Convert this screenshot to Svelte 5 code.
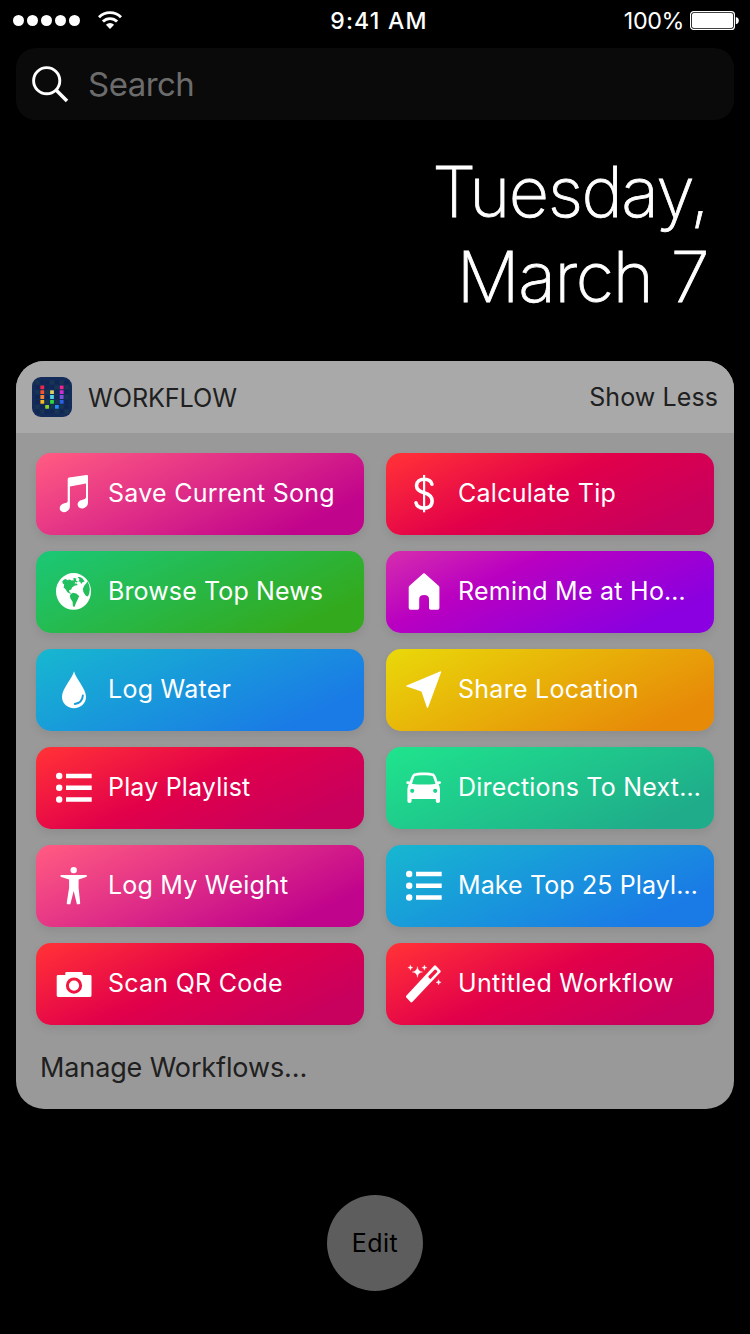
<script>
  const workflows = [
    { label: 'Save Current Song', icon: 'note', tone: 'pink', spacing: 0.26 },
    { label: 'Calculate Tip', icon: 'dollar', tone: 'red', spacing: 0.271 },
    { label: 'Browse Top News', icon: 'globe', tone: 'green', spacing: 0.12 },
    { label: 'Remind Me at Ho…', icon: 'home', tone: 'purple', spacing: 0.25 },
    { label: 'Log Water', icon: 'drop', tone: 'blue', spacing: 0.262 },
    { label: 'Share Location', icon: 'location', tone: 'yellow', spacing: 0.26 },
    { label: 'Play Playlist', icon: 'list', tone: 'red', spacing: 0.171 },
    { label: 'Directions To Next…', icon: 'car', tone: 'mint', spacing: 0.2 },
    { label: 'Log My Weight', icon: 'person', tone: 'pink', spacing: 0.218 },
    { label: 'Make Top 25 Playl…', icon: 'list', tone: 'blue', spacing: 0.11 },
    { label: 'Scan QR Code', icon: 'camera', tone: 'red', spacing: 0.254 },
    { label: 'Untitled Workflow', icon: 'wand', tone: 'red', spacing: 0.283 }
  ];

  const logoGrid = [5.4, 10.2, 15.1, 20, 24.9, 29.8, 34.6];
  const logoPixels = [
    [10.3, 10.3, '#f0244c'], [10.3, 15.2, '#f9532e'], [10.3, 20, '#fb8230'], [10.3, 24.9, '#f8b822'],
    [15.1, 29.8, '#8bd424'], [20, 15.2, '#d9cf62'], [20, 20, '#52cfe0'], [20, 24.9, '#2edb3e'],
    [24.9, 29.8, '#1f8cf8'], [29.7, 10.3, '#f0248c'], [29.7, 15.2, '#d22cd4'], [29.7, 20, '#7a52dc'], [29.7, 24.9, '#2c62e4']
  ];
</script>

<div class="screen">
  <header class="status">
    <div class="signal">
      <div class="dots"><i></i><i></i><i></i><i></i><i></i></div>
      <svg class="wifi" width="24" height="18" viewBox="0 0 24 18">
        <g fill="none" stroke="#fff" stroke-width="2.9">
          <path d="M1 6.2A15.6 15.6 0 0 1 23 6.2" />
          <path d="M4.9 10.6A10 10 0 0 1 19.1 10.6" />
        </g>
        <path fill="#fff" d="M12 18 7.9 13.7Q9.8 12 12 12T16.1 13.7Z" />
      </svg>
    </div>
    <div class="time">9:41 AM</div>
    <div class="power">
      <span>100%</span>
      <svg width="49" height="19" viewBox="0 0 49 19">
        <rect x=".6" y=".6" width="43.8" height="17.8" rx="3" fill="none" stroke="#fff" stroke-width="1.2" />
        <rect x="2" y="2" width="41" height="15" rx="1.8" fill="#fff" />
        <path d="M45.8 6Q48.8 6.6 48.8 9.6T45.8 13.3Z" fill="#fff" />
      </svg>
    </div>
  </header>

  <div class="search">
    <svg width="40" height="40" viewBox="0 0 40 40" fill="none" stroke="#fff">
      <circle cx="16.7" cy="16.7" r="13.1" stroke-width="2.9" />
      <path d="M25.8 25.8 37 37" stroke-width="3.5" />
    </svg>
    <span>Search</span>
  </div>

  <div class="date">
    <div class="day">Tuesday,</div>
    <div class="month">March 7</div>
  </div>

  <section class="widget">
    <div class="head">
      <svg class="logo" width="40" height="40" viewBox="0 0 40 40">
        <rect width="40" height="40" rx="9" fill="#142c5a" />
        {#each logoGrid as y, r}
          {#each logoGrid as x, c}
            <rect x={x - 1.9} y={y - 1.9} width="3.8" height="3.8" fill={(r * 3 + c * 2) % 5 < 2 ? '#18364f' : '#102654'} />
          {/each}
        {/each}
        {#each logoPixels as [x, y, fill]}
          <rect x={x - 1.9} y={y - 1.9} width="3.8" height="3.8" rx=".4" {fill} />
        {/each}
      </svg>
      <span class="name">WORKFLOW</span>
      <span class="less">Show Less</span>
    </div>

    <div class="grid">
      {#each workflows as w}
        <div class="tile {w.tone}">
          <svg width="40" height="40" viewBox="0 0 40 40" fill="#fff">
            {#if w.icon === 'note'}
              <path d="M13.7 6.2Q13.7 4.9 15 4.6L32.6 2Q34 1.8 34 3.1V29.4C34 33 31 35.4 27.7 35.4 25.2 35.4 23.6 33.8 23.6 31.6 23.6 28.6 26 27 29.4 26.4 31.4 26 32 25.3 32 24V10.6L15.9 13.5V33C15.9 36.9 13 39.2 9.8 39.2 7.3 39.2 5.7 37.6 5.7 35.3 5.7 32.4 8.1 30.7 11.2 30.1 13.2 29.7 13.7 29 13.7 27.7Z" />
            {:else if w.icon === 'dollar'}
              <g fill="none" stroke="#fff">
                <path stroke-width="3.6" stroke-linecap="round" d="M27.9 11.3C27.3 8 24.5 6.2 20.3 6.2 15.8 6.2 12.5 8.8 12.5 12.5 12.5 16.8 15.6 18.5 20 19.7 25 21.1 28.1 23.2 28.1 27.9 28.1 32.6 24.8 35.1 20.1 35.1 15.5 35.1 12.6 33.2 12 29.8" />
                <path stroke-width="2.2" d="M20.1 2V39.3" />
              </g>
            {:else if w.icon === 'globe'}
              <path fill-rule="evenodd" d="M19.5 2A17.5 18.4 0 1 1 19.5 38.8 17.5 18.4 0 1 1 19.5 2ZM8.2 10.6 10 8.4 12 7.9 13.2 9.2 15.6 8.6 17.5 9.6 20 9.2 19 7.8 20.4 7 22.4 7.6 21.8 9.4 23.9 10.2 22.6 11.6 21.2 11 20.6 12.6 22.9 12.5 23.6 14.2 20.8 14.6 18 16.4 17.3 18.4 15 19.3 15.6 21.2 17.2 22.2 16.4 22.8 13.4 21.2 11.6 18.2 9.6 16.6 10.2 13.4 8.8 12.5ZM16.8 22.9 19 21.8 22.2 22.6 25.2 24.9 23.7 28.6 22.2 31.4 20.4 36 18.9 35.2 18.6 30.7 16.6 27.8 15.8 25ZM23.6 6.1 26 6 28.6 7.4 30.7 10.8 28.8 11 27.2 12.9 26.2 10.8 24.4 10.6 25.6 8.6ZM33.4 10.2 32.2 12.6 30.3 14.6 28.8 18 29.4 21 31.8 24.8 34 25.6Q37.8 17.2 33.4 10.2Z" />
            {:else if w.icon === 'home'}
              <path d="M19.2 2.5Q20 1.8 20.8 2.5L34.6 14.7Q35.4 15.4 35.4 16.5V37Q35.4 38.7 33.7 38.7H26.7Q25 38.7 25 37V28.2Q25 24 20.1 24T15.2 28.2V37Q15.2 38.7 13.5 38.7H6.4Q4.7 38.7 4.7 37V16.5Q4.7 15.4 5.5 14.7Z" />
            {:else if w.icon === 'drop'}
              <path d="M20 2.3C21.5 9.5 32 19.5 32 27.8 32 34.6 26.6 39.2 20 39.2S8 34.6 8 27.8C8 19.5 18.5 9.5 20 2.3Z" />
              <path class="cut" d="M28.9 26.4C28.6 31 25.4 34.3 20.8 35" />
            {:else if w.icon === 'list'}
              <circle cx="5.2" cy="9" r="3.2" /><circle cx="5.2" cy="20.8" r="3.2" /><circle cx="5.2" cy="32.5" r="3.2" />
              <path d="M12 6.7H37.7V11.3H12ZM12 18.5H37.7V23.1H12ZM12 30.2H37.7V34.8H12Z" />
            {:else if w.icon === 'location'}
              <path d="M36 2.4Q37.5 1.9 37 3.4L24.1 38.4Q23.4 39.7 22.8 38.2L17.7 23.3Q17.5 22.5 16.7 22.2L2.6 17.6Q1.3 17 2.6 16.4Z" />
            {:else if w.icon === 'car'}
              <path fill-rule="evenodd" d="M10 6.6C13 5.1 26.5 5.1 29.5 6.6 31.5 7.6 32.5 11.3 33.5 14.6Q36.8 13.4 37 15.6 37.1 17.3 34.5 17.2 36 19.2 36 22V34.2Q36 36 33.9 36T31.8 34.2V32H7.6V34.2Q7.6 36 5.5 36T3.4 34.2V22Q3.4 19.2 4.8 17.2 2.1 17.3 2.2 15.6 2.5 13.4 5.9 14.6C6.9 11.3 8 7.6 10 6.6ZM10.9 9.1C10 10.3 8.9 13.6 8 17.1Q19.7 18.1 31.4 17.1C30.5 13.6 29.4 10.3 28.5 9.1 25.6 8.1 13.8 8.1 10.9 9.1ZM8.2 21.7A2.1 2.1 0 1 0 8.2 25.9 2.1 2.1 0 1 0 8.2 21.7ZM31.2 21.7A2.1 2.1 0 1 0 31.2 25.9 2.1 2.1 0 1 0 31.2 21.7Z" />
            {:else if w.icon === 'person'}
              <circle cx="19.7" cy="5.1" r="3.2" />
              <path d="M6.7 10H32.6Q33.6 11.6 32.2 12L24.6 14.6V22.7L26.2 38Q26.2 39.2 25 39.2H22.9L19.7 26 16.3 39.2H13.8Q12.6 39.2 12.7 38L15.1 22.7V14.6L7.2 12Q5.7 11.4 6.7 10Z" />
            {:else if w.icon === 'camera'}
              <path fill-rule="evenodd" d="M4 12H11.3V10.2Q11.3 9 12.5 9H27.5Q28.7 9 28.7 10.2V12H36.2Q37.5 12 37.5 13.3V32.6Q37.5 33.9 36.2 33.9H4Q2.7 33.9 2.7 32.6V13.3Q2.7 12 4 12ZM20 14.5A8.1 8.1 0 1 0 20 30.7 8.1 8.1 0 1 0 20 14.5Z" />
              <circle cx="20" cy="22.6" r="5.1" />
            {:else if w.icon === 'wand'}
              <path fill-rule="evenodd" d="M30.1 2.7Q31 1.8 31.9 2.7L36.4 7.4Q37.2 8.3 36.4 9.2L8.3 39Q7.4 39.8 6.5 39L2.3 34.6Q1.5 33.7 2.3 32.8ZM30.6 6.8 24.6 13.1Q24 13.8 24.7 14.5L25.7 15.6Q26.4 16.2 27 15.6L33 9.2Q33.7 8.5 33 7.8L32 6.8Q31.3 6.1 30.6 6.8Z" />
              <path d="M13.4 3.6Q13.8 8.6 18.6 9 13.8 9.4 13.4 14.4 13 9.4 8.2 9 13 8.6 13.4 3.6ZM6.4 1.9Q6.6 4.4 9 4.6 6.6 4.8 6.4 7.3 6.2 4.8 3.8 4.6 6.2 4.4 6.4 1.9ZM20.4 1.9Q20.6 4.4 23 4.6 20.6 4.8 20.4 7.3 20.2 4.8 17.8 4.6 20.2 4.4 20.4 1.9ZM34.6 16.6Q34.8 19.1 37.2 19.3 34.8 19.5 34.6 22 34.4 19.5 32 19.3 34.4 19.1 34.6 16.6Z" stroke="#fff" stroke-width=".3" />
            {/if}
          </svg>
          <span style:letter-spacing="{w.spacing}px">{w.label}</span>
        </div>
      {/each}
    </div>
    <div class="manage">Manage Workflows…</div>
  </section>

  <div class="edit">Edit</div>
</div>

<style>
  :global(body) { background: #000; }
  .screen {
    width: 750px; height: 1334px; box-sizing: border-box; overflow: hidden;
    display: flex; flex-direction: column;
    background: #000; color: #fff;
    font-family: Inter, "Liberation Sans", sans-serif; font-size: 25px; line-height: 30px;
    white-space: nowrap;
  }
  svg { display: block; flex: none; }
  .status { height: 48px; box-sizing: border-box; padding: 0 11px 7px 13px; display: grid; grid-template-columns: 1fr auto 1fr; align-items: center; }
  .signal { display: flex; align-items: center; gap: 18px; }
  .wifi { margin-top: -1px; }
  .dots { display: flex; gap: 2.7px; }
  .dots i { width: 11.3px; height: 11.3px; border-radius: 50%; background: #fff; }
  .time { font-size: 23px; font-weight: 500; letter-spacing: 1.25px; margin-left: 6px; }
  .power { display: flex; align-items: center; justify-content: flex-end; gap: 6px; font-size: 23.3px; letter-spacing: -.4px; }
  .search { margin: 0 16px; height: 72px; border-radius: 20px; background: #0a0a0a; display: flex; align-items: center; gap: 18px; padding-left: 14px; color: #6c6c6c; font-size: 33px; letter-spacing: -.54px; }
  .date { margin-top: 29px; padding-right: 42px; text-align: right; font-size: 70px; line-height: 85px; font-weight: 200; -webkit-text-stroke: .8px #fff; }
  .day { letter-spacing: -1.5px; }
  .month { letter-spacing: -1.4px; }
  .widget { margin: 42px 16px 0; height: 748px; border-radius: 28px; overflow: hidden; background: #999; color: #202020; }
  .head { height: 72px; box-sizing: border-box; padding: 0 16px; background: #a9a9a9; display: flex; align-items: center; }
  .name { margin-left: 16px; padding-top: 2px; font-size: 25.2px; letter-spacing: -.1px; }
  .less { margin-left: auto; letter-spacing: .1px; }
  .grid { padding: 20px 20px 0; display: grid; grid-template-columns: 328px 328px; column-gap: 22px; row-gap: 16px; }
  .tile { height: 82px; border-radius: 15px; padding: 0 0 2px 18px; box-sizing: border-box; display: flex; align-items: center; gap: 14px; color: #fff; box-shadow: 0 4px 8px rgba(0, 0, 0, .08); }
  .pink { background: linear-gradient(155deg, #ff5a82 2%, #c1048c 84%); }
  .red { background: linear-gradient(155deg, #ff2f38 4%, #e1004a 46%, #c8005e 86%); }
  .green { background: linear-gradient(155deg, #1bc775 2%, #33aa1e 84%); }
  .purple { background: linear-gradient(155deg, #d42bae 2%, #b900c1 33%, #8a00e0 84%); }
  .blue { background: linear-gradient(155deg, #17b6d0 2%, #1a7ae6 84%); }
  .yellow { background: linear-gradient(155deg, #e9d70a 2%, #e78a08 86%); }
  .mint { background: linear-gradient(155deg, #1fe38d 2%, #1fac8a 86%); }
  .cut { fill: none; stroke: #1a9bdb; stroke-width: 1.9; stroke-linecap: round; }
  .manage { padding: 28px 0 0 24px; font-size: 27px; letter-spacing: -.12px; }
  .edit { margin: 86px auto 0; width: 96px; height: 96px; border-radius: 50%; background: #5d5d5d; color: #000; display: flex; align-items: center; justify-content: center; letter-spacing: .5px; }
</style>
